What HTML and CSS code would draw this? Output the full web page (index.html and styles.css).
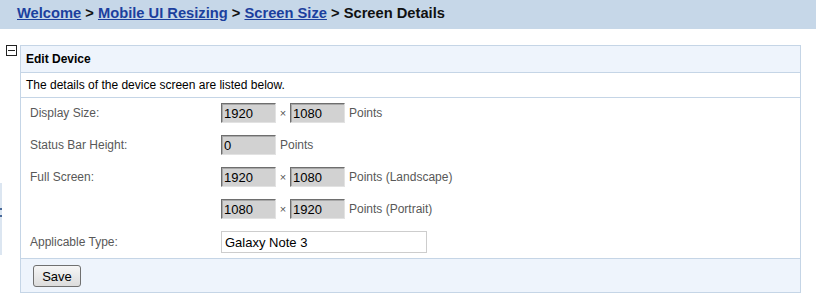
FILE: index.html
```html
<!DOCTYPE html>
<html lang="en">
<head>
    <meta charset="UTF-8">
    <title>Screen Details</title>
    <link rel="stylesheet" href="styles.css">
</head>
<body>
    <div class="topbar">
        <a href="#">Welcome</a> &gt; <a href="#">Mobile UI Resizing</a> &gt; <a href="#">Screen Size</a> &gt; Screen Details
    </div>

    <div class="splitter"><span></span><span></span></div>

    <div class="content">
        <svg class="toggle" width="11" height="11" viewBox="0 0 11 11">
            <rect x="0.5" y="0.5" width="10" height="10" fill="#fff" stroke="#222"/>
            <line x1="2" y1="5.5" x2="9" y2="5.5" stroke="#222"/>
        </svg>

        <div class="panel">
            <div class="panel-head">Edit Device</div>
            <div class="panel-desc">The details of the device screen are listed below.</div>

            <div class="form">
                <div class="row">
                    <div class="label">Display Size:</div>
                    <input class="num" type="text" value="1920" readonly>
                    <span class="times">&times;</span>
                    <input class="num" type="text" value="1080" readonly>
                    <span class="unit">Points</span>
                </div>
                <div class="row">
                    <div class="label">Status Bar Height:</div>
                    <input class="num" type="text" value="0" readonly>
                    <span class="unit">Points</span>
                </div>
                <div class="row">
                    <div class="label">Full Screen:</div>
                    <input class="num" type="text" value="1920" readonly>
                    <span class="times">&times;</span>
                    <input class="num" type="text" value="1080" readonly>
                    <span class="unit">Points (Landscape)</span>
                </div>
                <div class="row">
                    <div class="label"></div>
                    <input class="num" type="text" value="1080" readonly>
                    <span class="times">&times;</span>
                    <input class="num" type="text" value="1920" readonly>
                    <span class="unit">Points (Portrait)</span>
                </div>
                <div class="row">
                    <div class="label">Applicable Type:</div>
                    <input class="text" type="text" value="Galaxy Note 3">
                </div>
            </div>

            <div class="panel-foot">
                <button class="btn">Save</button>
            </div>
        </div>
    </div>
</body>
</html>
```

FILE: styles.css
```css
:root {
    --bar-color: #c6d7e8;
    --border-color: #c5d5e6;
    --head-bg: #eef4fc;
    --link-color: #1c3f9e;
    --label-color: #585858;
}

body {
    margin: 0;
    font-family: "Liberation Sans", Arial, sans-serif;
    font-size: 12px;
    color: #000;
    background: #fff;
}

/* breadcrumb bar */
.topbar {
    height: 29px;
    line-height: 26px;
    padding-left: 17px;
    background: var(--bar-color);
    font-size: 14.7px;
    font-weight: bold;
    color: #111;
}

.topbar a {
    color: var(--link-color);
}

/* faint splitter handle at the left edge */
.splitter {
    position: absolute;
    left: 0;
    top: 183px;
    width: 2px;
    height: 72px;
    background: #dce6f1;
}

.splitter span {
    position: absolute;
    left: 0;
    width: 2px;
    height: 2px;
    background: #4a6a9a;
}

.splitter span:first-child { top: 25px; }
.splitter span:last-child { top: 32px; }

.content {
    display: flex;
    align-items: flex-start;
    padding: 16px 15px 0 6px;
}

.toggle {
    flex: none;
    margin-right: 3px;
}

.panel {
    flex: 1;
    border: 1px solid var(--border-color);
}

.panel-head {
    height: 26px;
    line-height: 26px;
    padding-left: 5px;
    background: var(--head-bg);
    border-bottom: 1px solid var(--border-color);
    font-weight: bold;
}

.panel-desc {
    height: 24px;
    line-height: 24px;
    padding-left: 5px;
    border-bottom: 1px solid var(--border-color);
}

.form {
    display: flex;
    flex-direction: column;
    gap: 12px;
    padding: 5px 0 5px 9px;
}

.row {
    display: flex;
    align-items: center;
    height: 20px;
}

.row:last-child {
    height: 22px;
}

.label {
    width: 191px;
    flex: none;
    color: var(--label-color);
}

input {
    box-sizing: border-box;
    margin: 0;
    font-family: "Liberation Sans", Arial, sans-serif;
    font-size: 13px;
    color: #000;
    outline: none;
}

.num {
    width: 55px;
    height: 20px;
    padding: 0 0 0 2px;
    background: #d2d2d2;
    border: 1px solid;
    border-color: #6e6e6e #e2e2e2 #e2e2e2 #6e6e6e;
    box-shadow: inset 1px 1px 0 #a8a8a8;
}

.times {
    width: 14px;
    text-align: center;
    font-size: 11px;
    color: #555;
}

.unit {
    margin-left: 4px;
    color: var(--label-color);
}

.text {
    width: 206px;
    height: 22px;
    padding: 0 0 0 3px;
    background: #fff;
    border: 1px solid #cdcdcd;
}

.panel-foot {
    padding: 6px 0 5px 12px;
    background: var(--head-bg);
    border-top: 1px solid var(--border-color);
}

.btn {
    display: block;
    width: 48px;
    height: 22px;
    padding: 0;
    font-family: "Liberation Sans", Arial, sans-serif;
    font-size: 13px;
    color: #000;
    background: linear-gradient(#f6f6f6, #dcdcdc);
    border: 1px solid #707070;
    border-radius: 3px;
}
```
